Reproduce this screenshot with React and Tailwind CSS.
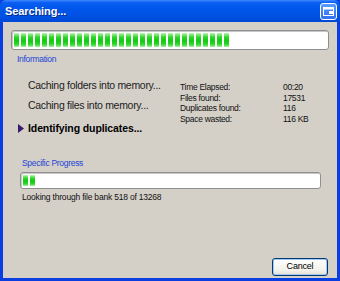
import React from "react";

function Blocks({ count }) {
  return (
    <div className="flex gap-[2px] h-full items-stretch">
      {Array.from({ length: count }).map((_, i) => (
        <div
          key={i}
          className="w-[5px] bg-[linear-gradient(to_bottom,#b9f5b0_0%,#2ed52a_30%,#14c914_55%,#2ed52a_80%,#a7eea0_100%)]"
        />
      ))}
    </div>
  );
}

export default function App() {
  return (
    <div
      className="w-[340px] h-[281px] flex flex-col overflow-hidden bg-[#0a3ee0]"
      style={{ fontFamily: '"Liberation Sans", Arial, sans-serif' }}
    >
      {/* Title bar */}
      <div className="h-[22px] shrink-0 flex items-center justify-between pl-[5px] pr-[3px] bg-[linear-gradient(to_bottom,#3d8bff_0%,#0a5ef2_12%,#0055ea_40%,#0052e4_70%,#0047d6_100%)] rounded-t-[6px]">
        <span className="text-white font-bold text-[11px] tracking-[-0.1px] [text-shadow:1px_1px_0_#0a2a8a]">
          Searching...
        </span>
        <div className="w-[17px] h-[17px] rounded-[3px] border border-white bg-[linear-gradient(to_bottom,#5a9bff,#2d6ff0)] flex items-center justify-center">
          <svg width="11" height="9" viewBox="0 0 11 9">
            <rect x="0.5" y="0.5" width="10" height="8" fill="none" stroke="white" strokeWidth="1" />
            <rect x="0.5" y="0.5" width="10" height="2" fill="white" />
            <rect x="6" y="4" width="5" height="3" fill="white" />
          </svg>
        </div>
      </div>

      {/* Body */}
      <div className="flex-1 mx-[3px] mb-[3px] bg-[#d4d0c8] flex flex-col">
        {/* Top progress */}
        <div className="mt-[8px] ml-[8px] w-[318px] h-[20px] rounded-[3px] border border-[#8e8f8f] bg-white p-[2px] shadow-[inset_1px_1px_0_#c8c8c8]">
          <Blocks count={31} />
        </div>

        {/* Information */}
        <div className="ml-[14px] mt-[3px] text-[8.5px] tracking-[-0.3px] text-[#1c45d6] leading-[12px]">Information</div>

        <div className="flex items-start mt-[14px]">
          <div className="w-[172px] flex flex-col text-[10.5px] tracking-[-0.3px] text-[#222] leading-[13px]">
            <div className="ml-[25px] whitespace-nowrap">Caching folders into memory...</div>
            <div className="ml-[25px] mt-[7px] whitespace-nowrap">Caching files into memory...</div>
            <div className="mt-[10px] flex items-center whitespace-nowrap">
              <svg width="6" height="9" viewBox="0 0 6 9" className="ml-[15px] mr-[4px]">
                <polygon points="0,0 6,4.5 0,9" fill="#3a1a6e" />
              </svg>
              <span className="font-bold text-black tracking-[-0.1px]">Identifying duplicates...</span>
            </div>
          </div>
          <div className="mt-[3px] ml-[5px] grid grid-cols-[103px_auto] content-start text-[8.5px] tracking-[-0.3px] leading-[10.7px] text-[#111]">
            <span>Time Elapsed:</span><span>00:20</span>
            <span>Files found:</span><span>17531</span>
            <span>Duplicates found:</span><span>116</span>
            <span>Space wasted:</span><span>116 KB</span>
          </div>
        </div>

        {/* Specific progress */}
        <div className="ml-[19px] mt-[22px] text-[8.5px] tracking-[-0.3px] text-[#1c45d6] leading-[12px]">Specific Progress</div>
        <div className="ml-[17px] mt-[3px] w-[301px] h-[17px] rounded-[3px] border border-[#8e8f8f] bg-white p-[2px] shadow-[inset_1px_1px_0_#c8c8c8]">
          <Blocks count={2} />
        </div>
        <div className="ml-[19px] mt-[2px] text-[8.5px] tracking-[-0.2px] text-[#111] leading-[12px]">Looking through file bank 518 of 13268</div>

        <div className="flex-1" />
        <div className="flex justify-end mr-[9px] mb-[2px]">
          <button className="w-[56px] h-[18px] rounded-[3px] border border-[#003c74] bg-[linear-gradient(to_bottom,#ffffff,#f2f1ea_70%,#e3e0d6)] shadow-[inset_0_0_0_1px_#a8c4f0] text-[9px] tracking-[-0.2px] text-black flex items-center justify-center">
            Cancel
          </button>
        </div>
      </div>
    </div>
  );
}
